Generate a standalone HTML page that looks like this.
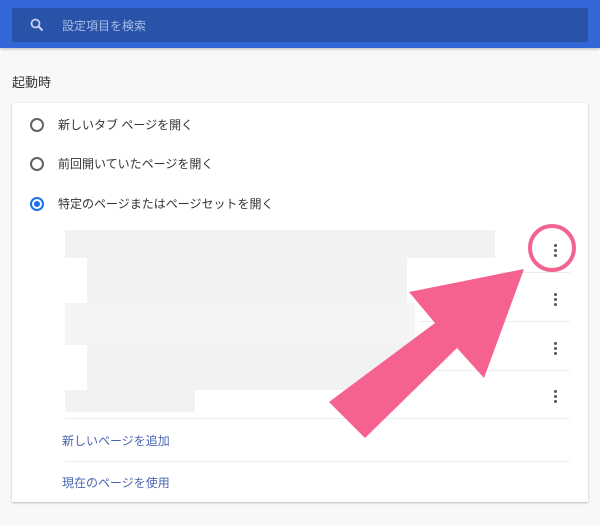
<!DOCTYPE html><html><head><meta charset="utf-8"><style>
body{margin:0;width:600px;height:526px;background:#f8f8fa;font-family:"Liberation Sans","Noto Sans CJK JP",sans-serif;position:relative;overflow:hidden}
.hdr{position:absolute;left:0;top:0;width:600px;height:48px;background:#3366d6;box-shadow:0 1px 3px rgba(0,0,0,.25)}
.sb{position:absolute;left:12px;top:8px;width:576px;height:34px;background:#2853a8;}
.sb span{position:absolute;left:50px;top:9px;font-size:12px;color:#a9bde6}
.t{position:absolute;font-size:13px;color:#333}
.card{position:absolute;left:12px;top:103px;width:576px;height:399px;background:#fff;box-shadow:0 1px 2px rgba(0,0,0,.25)}
.r{position:absolute;left:30px;width:10px;height:10px;border:2px solid #5f6368;border-radius:50%}
.sep{position:absolute;height:1px;background:#ededed}
.dots{position:absolute;left:554px;width:3px}
.dots i{display:block;width:3px;height:3px;border-radius:50%;background:#555;margin-bottom:2px}
.lk{position:absolute;left:62px;font-size:12px;color:#4a66b0}
.b{position:absolute;background:#f2f2f4}
</style></head><body>
<div class="hdr"><div class="sb"><svg style="position:absolute;left:18px;top:10px" width="14" height="14" viewBox="0 0 14 14"><circle cx="5.5" cy="5.5" r="4" fill="none" stroke="#c5d3f0" stroke-width="1.8"/><path d="M8.5 8.5L12.5 12.5" stroke="#c5d3f0" stroke-width="2"/></svg><span>設定項目を検索</span></div></div>
<div class="t" style="left:12px;top:72px">起動時</div>
<div class="card"></div>
<div class="r" style="top:118px"></div><div class="t" style="left:58px;top:116px;font-size:12px">新しいタブ ページを開く</div>
<div class="r" style="top:157px"></div><div class="t" style="left:58px;top:155px;font-size:12px">前回開いていたページを開く</div>
<div class="r" style="top:197px;border-color:#1a73e8"><div style="position:absolute;left:2px;top:2px;width:6px;height:6px;border-radius:50%;background:#1a73e8"></div></div><div class="t" style="left:58px;top:195px;font-size:12px">特定のページまたはページセットを開く</div>
<div class="b" style="left:65px;top:230px;width:430px;height:28px;background:#f0f3f0"></div>
<div class="b" style="left:87px;top:258px;width:320px;height:45px"></div>
<div class="b" style="left:65px;top:303px;width:350px;height:42px;background:#f4f4f6"></div>
<div class="b" style="left:87px;top:345px;width:330px;height:45px"></div>
<div class="b" style="left:65px;top:390px;width:130px;height:22px"></div>
<div class="sep" style="left:500px;top:272px;width:70px"></div>
<div class="sep" style="left:420px;top:321px;width:150px"></div>
<div class="sep" style="left:420px;top:370px;width:150px"></div>
<div class="sep" style="left:65px;top:418px;width:505px"></div>
<div class="sep" style="left:65px;top:461px;width:505px"></div>
<div class="dots" style="top:244px"><i></i><i></i><i></i></div>
<div class="dots" style="top:293px"><i></i><i></i><i></i></div>
<div class="dots" style="top:342px"><i></i><i></i><i></i></div>
<div class="dots" style="top:390px"><i></i><i></i><i></i></div>
<div class="lk" style="top:432px">新しいページを追加</div>
<div class="lk" style="top:474px">現在のページを使用</div>
<svg style="position:absolute;left:0;top:0" width="600" height="526"><circle cx="552" cy="248" r="22" fill="none" stroke="#f0648f" stroke-width="4"/><polygon points="524,269 484,378 457,348 365,438 329,402 435,323 409,292" fill="#f5628f"/></svg>
</body></html>
